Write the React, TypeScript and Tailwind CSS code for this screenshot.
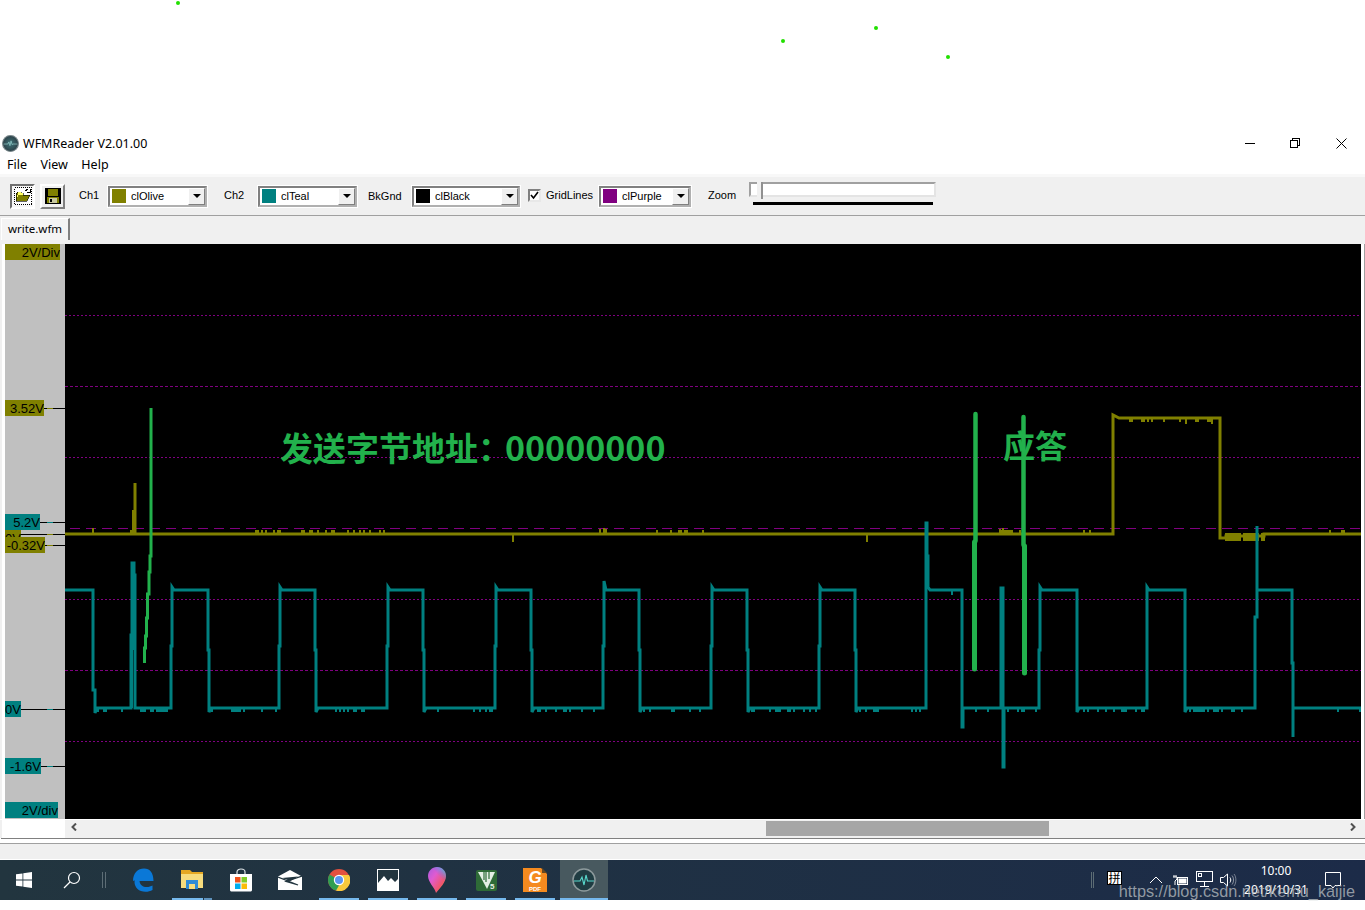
import React from "react";

const UI = "font-['Noto_Sans','Liberation_Sans',sans-serif]";
const ARIAL = "font-['Liberation_Sans',Arial,sans-serif]";

function frac(n: number) {
  return n - Math.floor(n);
}
function bumps(x0: number, x1: number, y: number, dy: number, seed: number, density: number) {
  let d = "";
  for (let x = x0; x < x1; x += 2) {
    if (frac(Math.sin(x * 12.9898 + seed) * 43758.5453) < density) {
      d += `M${x} ${y}v${dy}`;
    }
  }
  return d;
}

const tealMain =
  "M65 590H93V690H95V713L97 708H131V635H132V563H134V575H135V648V708H171V646H172V587L174 590H208V650H209V712L211 708" +
  "H279V646H280V587L282 590H315V650H316V712L318 708" +
  "H387V646H388V587L390 590H423V650H424V712L426 708" +
  "H495V646H496V587L498 590H531V650H532V712L534 708" +
  "H603V646H604V581L606 590H639V650H640V712L642 708" +
  "H711V646H712V587L714 590H747V650H748V712L750 708" +
  "H819V646H820V587L822 590H855V650H856V712L858 708" +
  "H926V523H927V556H928V587L930 590H962V727H963V708H1001V588H1003V767H1004V708H1006H1039V650H1040V587L1042 590H1077V712L1079 708" +
  "H1147V587L1149 590H1185V712L1187 708" +
  "H1255V617H1257V526V590H1292V663H1293V737V708H1295H1361";

const teal2 = "M131.5 635V708M133 575V650M1002 588V708";

const oliveMain = "M65 534H1113V415L1119 418H1220V538H1226V536H1264V534H1361";

function Combo({ color, name, w }: { color: string; name: string; w: string }) {
  return (
    <div className={`${w} h-[21px] shrink-0 flex items-center bg-white border-2 border-t-[#808080] border-l-[#808080] border-r-[#b0b0b0] border-b-[#b0b0b0] outline outline-1 outline-white`}>
      <div className="ml-[2px] w-[14px] h-[14px] shrink-0" style={{ backgroundColor: color }} />
      <span className={`ml-[5px] flex-1 text-[11px] text-black ${ARIAL}`}>{name}</span>
      <div className="w-[17px] h-[17px] shrink-0 bg-[#f0f0f0] border-r border-b border-r-[#808080] border-b-[#808080] border-t border-l border-t-white border-l-white flex items-center justify-center">
        <div className="w-0 h-0 border-l-[4px] border-r-[4px] border-t-[4px] border-l-transparent border-r-transparent border-t-black" />
      </div>
    </div>
  );
}

function Label({ text, bg, top, w }: { text: string; bg: string; top: string; w: string }) {
  return (
    <div className={`absolute left-0 ${top} ${w} h-[16px] ${bg} text-right text-[13px] leading-[17px] text-black overflow-hidden whitespace-nowrap ${ARIAL}`}>
      {text}
    </div>
  );
}

function Tick({ top, left, c }: { top: string; left: string; c: string }) {
  return (
    <div className={`absolute ${top} ${left} right-0 h-px bg-black`}>
      <div className={`absolute top-0 h-px w-[6px] ${c} right-[12px]`} />
    </div>
  );
}

function Chart() {
  return (
    <svg viewBox="65 244 1296 575" className="block w-[1296px] h-[575px]">
      <rect x="65" y="244" width="1296" height="575" fill="#000" />
      <g stroke="#800080" strokeWidth="1" shapeRendering="crispEdges" fill="none">
        <path d="M65 315.5H1361M65 457.5H1361M65 599.5H1361M65 741.5H1361" strokeDasharray="2 2" />
        <path d="M65 386.5H1361M65 670.5H1361" strokeDasharray="3 2" />
        <path d="M70 528.5H1361" strokeDasharray="10 6" />
      </g>
      <g fill="none" stroke="#808000">
        <path d={oliveMain} strokeWidth="3" strokeLinejoin="miter" />
        <path d="M135 483V534" strokeWidth="3" />
        <path d="M134 510V534" strokeWidth="4" />
        <path d="M131 530V534M93 528V534M1000 529V534M1003 528V534" strokeWidth="2" />
        <path
          d={
            bumps(256, 282, 534, -4, 1, 0.6) +
            bumps(300, 386, 534, -4, 2, 0.35) +
            bumps(600, 608, 534, -5, 3, 0.7) +
            bumps(655, 705, 534, -4, 4, 0.3) +
            bumps(1000, 1022, 534, -4, 5, 0.4) +
            bumps(1078, 1092, 534, -4, 6, 0.5) +
            bumps(1330, 1361, 534, -4, 7, 0.2) +
            bumps(1120, 1218, 418, 4, 8, 0.25) +
            bumps(1226, 1266, 533, 8, 9, 0.8) +
            "M513 534v8M867 534v8M604 534v-6M1186 418v6M1212 418v6"
          }
          strokeWidth="2"
        />
      </g>
      <g fill="none" stroke="#008080">
        <path d={tealMain} strokeWidth="3" strokeLinejoin="miter" />
        <path d={teal2} strokeWidth="3" />
        <path
          d={
            bumps(98, 130, 708, 4, 11, 0.4) +
            bumps(137, 170, 708, 4, 12, 0.4) +
            bumps(212, 278, 708, 4, 13, 0.25) +
            bumps(320, 386, 708, 4, 14, 0.25) +
            bumps(428, 494, 708, 4, 15, 0.25) +
            bumps(536, 602, 708, 4, 16, 0.25) +
            bumps(644, 710, 708, 4, 17, 0.25) +
            bumps(752, 818, 708, 4, 18, 0.25) +
            bumps(860, 925, 708, 4, 19, 0.25) +
            bumps(966, 1000, 708, 4, 20, 0.2) +
            bumps(1008, 1038, 708, 4, 21, 0.25) +
            bumps(1082, 1146, 708, 4, 22, 0.3) +
            bumps(1190, 1254, 708, 4, 23, 0.3) +
            bumps(1300, 1361, 708, 4, 24, 0.1) +
            "M952 590v5"
          }
          strokeWidth="2"
        />
      </g>
      <g fill="none" stroke="#22b14c" strokeLinecap="round">
        <path d="M151 408V556H150V572H149V594H147.5V618H146.5V636H145.5V648H144.5V663" strokeWidth="3" strokeLinecap="butt" />
        <path d="M975.5 414V541" strokeWidth="4.5" />
        <path d="M974.5 542V669" strokeWidth="5" />
        <path d="M1023.5 417V545" strokeWidth="4.5" />
        <path d="M1024.5 546V673" strokeWidth="5" />
      </g>
    </svg>
  );
}

function TitleIcon({ size }: { size: number }) {
  return (
    <svg width={size} height={size} viewBox="0 0 32 32">
      <defs>
        <radialGradient id={`ti${size}`} cx="50%" cy="50%" r="55%">
          <stop offset="0%" stopColor="#3f7478" />
          <stop offset="100%" stopColor="#2a3a42" />
        </radialGradient>
      </defs>
      <circle cx="16" cy="16" r="15" fill={`url(#ti${size})`} stroke="#7d8b8e" strokeWidth="2" />
      <path d="M3 17H11L13 13L15 20L17 11L19 18L21 17H29" fill="none" stroke="#9fd8d4" strokeWidth="1.2" />
    </svg>
  );
}

function TaskIcon({ children, active, bar, split }: { children?: React.ReactNode; active?: boolean; bar?: boolean; split?: boolean }) {
  return (
    <div className={`relative w-[48px] h-[40px] shrink-0 flex items-center justify-center ${active ? "bg-[#48595f]" : ""}`}>
      {children}
      {bar && !split && <div className={`absolute bottom-0 h-[2px] bg-[#76b9ed] ${active ? "left-0 right-0" : "left-[4px] right-[4px]"}`} />}
      {split && (
        <div className="absolute bottom-0 left-[4px] right-[4px] h-[2px] flex gap-px">
          <div className="w-[31px] bg-[#76b9ed]" />
          <div className="flex-1 bg-[#5f93bd]" />
        </div>
      )}
    </div>
  );
}

function Taskbar() {
  return (
    <div className="h-[40px] shrink-0 flex items-center bg-gradient-to-r from-[#22353f] to-[#1c2b48] relative">
      <div className="w-[48px] h-[40px] flex items-center justify-center">
        <svg width="16" height="16" viewBox="0 0 16 16" fill="#fff">
          <path d="M0 2.3L6.5 1.4V7.6H0ZM7.3 1.3L16 0V7.6H7.3ZM0 8.4H6.5V14.6L0 13.7ZM7.3 8.4H16V16L7.3 14.7Z" />
        </svg>
      </div>
      <div className="w-[48px] h-[40px] flex items-center justify-center">
        <svg width="18" height="18" viewBox="0 0 18 18" fill="none" stroke="#fff" strokeWidth="1.2">
          <circle cx="11" cy="7" r="5.5" />
          <path d="M7 11L1 17" />
        </svg>
      </div>
      <div className="ml-[6px] mr-[13px] w-[4px] h-[16px] border-x border-[#5d6d75]" />
      <div className="flex gap-px">
        <TaskIcon>
          <svg width="22" height="24" viewBox="0 0 22 24">
            <path
              d="M1 13C1 5 6 0.5 12 0.5C18 0.5 21.5 5 21.5 13H7.5C8 17 11 19 14.5 19C17 19 19 18.3 20.5 17.5V22C18.5 23.2 16 23.8 13.5 23.8C7 23.8 2.5 19.5 2.5 14C2.5 11 4 8.5 7 6.5C5.5 8 4.8 9.3 4.5 10.5C6 8 9 6 11 6C13.5 6 15 7.5 15 9.3H8C7.7 10 7.6 10.2 7.5 10.2L1 13Z"
              fill="#0a78d7"
            />
          </svg>
        </TaskIcon>
        <TaskIcon split>
          <svg width="22" height="20" viewBox="0 0 22 20" className="-mt-px">
            <path d="M0 0H9L11 2H22V18H0Z" fill="#e5a823" />
            <rect x="0" y="3" width="22" height="15" fill="#f7dc7d" />
            <rect x="0" y="3" width="22" height="1" fill="#e5a823" />
            <path d="M5 19V10H17V19H14V14H8V19Z" fill="#2f8bd6" />
            <rect x="8" y="14" width="6" height="5" fill="#f7dc7d" />
          </svg>
        </TaskIcon>
        <TaskIcon>
          <svg width="24" height="24" viewBox="0 0 24 24">
            <path d="M8 6V4C8 0 16 0 16 4V6" fill="none" stroke="#dfe5e8" strokeWidth="1.2" />
            <path d="M1 6H23V22C23 23 22 23.5 21 23.5H3C2 23.5 1 23 1 22Z" fill="#fff" />
            <rect x="6" y="9" width="5.5" height="5.5" fill="#f1511b" />
            <rect x="12.5" y="9" width="5.5" height="5.5" fill="#80cc28" />
            <rect x="6" y="15.5" width="5.5" height="5.5" fill="#00adef" />
            <rect x="12.5" y="15.5" width="5.5" height="5.5" fill="#fbbc09" />
          </svg>
        </TaskIcon>
        <TaskIcon>
          <svg width="24" height="20" viewBox="0 0 24 20">
            <path d="M0 6.5L12 0L24 6.5V20H0Z" fill="#fff" />
            <path d="M0 7L20 15L8 11.5L24 6" fill="none" stroke="#22353f" strokeWidth="1.2" />
            <path d="M4 8L20 6.5L12.5 11Z" fill="#22353f" />
          </svg>
        </TaskIcon>
        <TaskIcon bar>
          <svg width="22" height="22" viewBox="0 0 22 22">
            <circle cx="11" cy="11" r="11" fill="#e2503f" />
            <path d="M11 6H21A11 11 0 0 1 8 21.6Z" fill="#f8c93d" />
            <path d="M11 11L1.5 5.5A11 11 0 0 0 8 21.6L13 13Z" fill="#2f9e52" />
            <circle cx="11" cy="11" r="5.2" fill="#fff" />
            <circle cx="11" cy="11" r="4" fill="#5a95f2" />
          </svg>
        </TaskIcon>
        <TaskIcon bar>
          <svg width="22" height="22" viewBox="0 0 22 22">
            <rect x="0.5" y="0.5" width="21" height="21" fill="#22353f" stroke="#fff" />
            <path d="M1 22V14L7 7L11 12L14 9L18 13L21 10V22Z" fill="#fff" />
          </svg>
        </TaskIcon>
        <TaskIcon bar>
          <svg width="18" height="26" viewBox="0 0 18 26">
            <defs>
              <linearGradient id="p3d" x1="0" y1="0" x2="1" y2="1">
                <stop offset="0%" stopColor="#a65be0" />
                <stop offset="35%" stopColor="#e05bd0" />
                <stop offset="70%" stopColor="#f0566e" />
                <stop offset="100%" stopColor="#f5a623" />
              </linearGradient>
              <linearGradient id="p3e" x1="1" y1="0" x2="0" y2="1">
                <stop offset="0%" stopColor="#28e0e6" />
                <stop offset="60%" stopColor="#4a7cf0" stopOpacity="0" />
              </linearGradient>
            </defs>
            <path d="M9 0C14 0 18 4 18 9C18 15 12 21 8 26C7 21 0 15 0 9C0 4 4 0 9 0Z" fill="url(#p3d)" />
            <path d="M9 0C14 0 18 4 18 9C18 11 17 13 16 14C12 10 8 6 5 1C6 0.5 7.5 0 9 0Z" fill="url(#p3e)" />
          </svg>
        </TaskIcon>
        <TaskIcon bar>
          <svg width="21" height="21" viewBox="0 0 21 21">
            <rect width="21" height="21" rx="2" fill="#2e6b37" />
            <path d="M2 2H19L11 19Z" fill="#e4efe5" />
            <path d="M8 2V10M10 2V12M13 2V9" stroke="#2e6b37" strokeWidth="1.2" />
            <text x="14" y="19" fontSize="8" fontWeight="700" fill="#e4efe5" fontFamily="Liberation Sans">5</text>
          </svg>
        </TaskIcon>
        <TaskIcon bar>
          <svg width="24" height="24" viewBox="0 0 24 24">
            <path d="M0 0H18L24 6V24H0Z" fill="#f58a1f" />
            <path d="M19 0L24 5H19Z" fill="#6a4a20" />
            <text x="12" y="15" fontSize="17" fontWeight="700" fontStyle="italic" fill="#fff" textAnchor="middle" fontFamily="Liberation Sans">G</text>
            <text x="12" y="22.5" fontSize="6" fontWeight="700" fill="#fff" textAnchor="middle" fontFamily="Liberation Sans">PDF</text>
          </svg>
        </TaskIcon>
        <TaskIcon active bar>
          <svg width="24" height="24" viewBox="0 0 24 24">
            <circle cx="12" cy="12" r="11" fill="#1f3c42" stroke="#8d9a9c" strokeWidth="1.5" />
            <path d="M2 13H8L10 9L12 17L14 7L15.5 13H22" fill="none" stroke="#58d8cc" strokeWidth="1.1" />
          </svg>
        </TaskIcon>
      </div>
      <div className="flex-1" />
      <div className="w-[3px] h-[16px] border-x border-[#5d6d75] mr-[13px]" />
      <div className="w-[15px] h-[14px] mb-[4px] bg-white border border-black flex items-center justify-center text-[12px] leading-none text-black font-['Noto_Sans_CJK_SC',sans-serif] mr-[27px]">
        拼
      </div>
      <svg width="14" height="8" viewBox="0 0 14 8" fill="none" stroke="#fff" strokeWidth="1" className="mr-[9px]">
        <path d="M1 7L7 1L13 7" />
      </svg>
      <svg width="17" height="13" viewBox="0 0 17 13" fill="none" stroke="#fff" strokeWidth="1" className="mr-[7px]">
        <rect x="5.5" y="3.5" width="10" height="7" />
        <rect x="7" y="5" width="7" height="4" fill="#fff" />
        <path d="M2 1V3M4 1V3M1 3H5V5L3 7V11" />
      </svg>
      <svg width="17" height="18" viewBox="0 0 17 18" fill="none" stroke="#fff" strokeWidth="1" className="mr-[7px]">
        <rect x="0.5" y="0.5" width="16" height="10" />
        <rect x="2.5" y="2.5" width="3" height="3" />
        <path d="M8.5 11V15M4 15.5H13" />
      </svg>
      <svg width="17" height="14" viewBox="0 0 17 14" fill="none" stroke="#fff" strokeWidth="1">
        <path d="M0.5 4.5H3.5L7.5 1V13L3.5 9.5H0.5Z" />
        <path d="M10 4.5C11 6 11 8 10 9.5" />
        <path d="M12 2.5C14 5 14 9 12 11.5" opacity="0.5" />
        <path d="M14 1C16.5 4 16.5 10 14 13" opacity="0.4" />
      </svg>
      <div className={`w-[78px] text-center text-white text-[12px] leading-[19px] ${UI}`}>
        <div>10:00</div>
        <div>2019/10/31</div>
      </div>
      <svg width="16" height="17" viewBox="0 0 16 17" fill="none" stroke="#fff" strokeWidth="1" className="ml-[10px] mr-[24px]">
        <path d="M0.5 0.5H15.5V13.5H10L8 16L6 13.5H0.5Z" />
      </svg>
      <div className={`absolute right-[10px] top-[22px] text-[16.3px] leading-[18px] text-[#b9bfc2]/75 whitespace-nowrap ${ARIAL}`}>
        https://blog.csdn.net/kemu_kaijie
      </div>
    </div>
  );
}

export default function App() {
  return (
    <div className="w-[1365px] h-[910px] bg-white flex flex-col overflow-hidden relative">
      {/* scattered dots */}
      <div className="h-[132px] shrink-0 relative">
        <div className="absolute left-[176px] top-px w-1 h-1 rounded-full bg-[#22e000]" />
        <div className="absolute left-[781px] top-[39px] w-1 h-1 rounded-full bg-[#22e000]" />
        <div className="absolute left-[874px] top-[26px] w-1 h-1 rounded-full bg-[#22e000]" />
        <div className="absolute left-[946px] top-[55px] w-1 h-1 rounded-full bg-[#22e000]" />
      </div>
      {/* title */}
      <div className={`h-[22px] shrink-0 flex items-center pl-[2px] bg-white text-[12.5px] text-black ${UI}`}>
        <TitleIcon size={17} />
        <span className="ml-[4px] mt-[2px]">WFMReader V2.01.00</span>
        <div className="flex-1" />
        <svg width="10" height="10" viewBox="0 0 10 10" stroke="#000" fill="none" shapeRendering="crispEdges" className="mr-[35px]">
          <path d="M0 5.5H10" />
        </svg>
        <svg width="10" height="10" viewBox="0 0 10 10" stroke="#000" fill="none" shapeRendering="crispEdges" className="mr-[36px]">
          <rect x="0.5" y="2.5" width="7" height="7" />
          <path d="M2.5 2V0.5H9.5V7.5H8" />
        </svg>
        <svg width="11" height="11" viewBox="0 0 11 11" stroke="#000" fill="none" className="mr-[18px]">
          <path d="M0.5 0.5L10.5 10.5M10.5 0.5L0.5 10.5" />
        </svg>
      </div>
      {/* menu */}
      <div className={`h-[20px] shrink-0 flex items-center pl-[7px] pt-[2px] gap-[13.5px] bg-white text-[12.5px] text-black ${UI}`}>
        <span>File</span>
        <span>View</span>
        <span>Help</span>
      </div>
      <div className="h-[3px] shrink-0 bg-[#f8f8f8]" />
      {/* toolbar */}
      <div className={`h-[39px] shrink-0 flex items-center pl-[10px] bg-[#f0f0f0] border-b border-[#a0a0a0] text-[11px] text-black ${ARIAL}`}>
        <div className="w-[25px] h-[25px] shrink-0 border-2 border-t-[#707070] border-l-[#707070] border-r-white border-b-white bg-[#f7f7f7] flex items-center justify-center">
          <svg width="18" height="18" viewBox="0 0 18 18" shapeRendering="crispEdges">
            <rect x="0.5" y="0.5" width="17" height="17" fill="#fff" stroke="#000" strokeDasharray="1 1" />
            <path d="M2 14V6H3V5H7V6H9V8H16L13 14Z" fill="#808000" stroke="#000" strokeWidth="0.6" />
            <path d="M3 8H9V6H7V5H4V12Z" fill="#ffff66" />
            <path d="M11 4L14 2M13 5H16V2" fill="none" stroke="#000" />
          </svg>
        </div>
        <div className="ml-[5px] w-[25px] h-[25px] shrink-0 border-2 border-t-white border-l-white border-r-[#808080] border-b-[#808080] bg-[#f0f0f0] flex items-center justify-center">
          <svg width="16" height="16" viewBox="0 0 16 16" shapeRendering="crispEdges">
            <path d="M0 0H15L16 1V16H0Z" fill="#000" />
            <rect x="3" y="1" width="10" height="7" fill="#808000" />
            <rect x="2" y="9" width="12" height="6" fill="#808000" />
            <rect x="4" y="10" width="8" height="5" fill="#c8c8a0" />
            <rect x="5" y="11" width="2" height="3" fill="#000" />
          </svg>
        </div>
        <span className="ml-[14px] w-[29px] -mt-[2px]">Ch1</span>
        <Combo color="#808000" name="clOlive" w="w-[99px]" />
        <span className="ml-[17px] w-[34px] -mt-[2px]">Ch2</span>
        <Combo color="#008080" name="clTeal" w="w-[99px]" />
        <span className="ml-[11px] w-[44px]">BkGnd</span>
        <Combo color="#000000" name="clBlack" w="w-[108px]" />
        <div className="ml-[8px] w-[13px] h-[13px] shrink-0 border-2 border-t-[#808080] border-l-[#808080] border-r-[#e8e8e8] border-b-[#e8e8e8] bg-white flex items-center justify-center -mt-[2px]">
          <svg width="9" height="9" viewBox="0 0 9 9" fill="none" stroke="#000" strokeWidth="1.6">
            <path d="M1 4L3.5 7L8 1" />
          </svg>
        </div>
        <span className="ml-[5px] w-[53px] -mt-[2px]">GridLines</span>
        <Combo color="#800080" name="clPurple" w="w-[92px]" />
        <span className="ml-[17px] w-[41px] -mt-[2px]">Zoom</span>
        <div className="w-[187px] h-[28px] shrink-0 flex flex-col -mt-[1px]">
          <div className="relative h-[15px] bg-white border-2 border-t-[#a0a0a0] border-l-[#a0a0a0] border-r-[#e4e4e4] border-b-[#e4e4e4]">
            <div className="absolute left-[6px] -top-[2px] w-[6px] h-[17px] bg-[#f0f0f0] border-r-2 border-r-[#909090]" />
          </div>
          <div className="mt-[5px] ml-[4px] w-[180px] h-[3px] bg-black" />
        </div>
      </div>
      {/* tab strip */}
      <div className={`h-[28px] shrink-0 pl-[1px] pt-[2px] bg-[#f0f0f0] text-[11.5px] text-black ${UI}`}>
        <div className="w-[69px] h-[22px] pb-[2px] bg-[#f4f4f4] border-t border-l border-t-white border-l-white border-r-2 border-r-[#808080] flex items-center justify-center">
          write.wfm
        </div>
      </div>
      {/* main chart area */}
      <div className="h-[575px] shrink-0 flex bg-[#f4f4f4]">
        <div className="w-[5px] shrink-0 bg-white border-l-2 border-[#f0f0f0]" />
        <div className="relative w-[60px] shrink-0 bg-[#c0c0c0]">
          <Tick top="top-[164px]" left="left-[39px]" c="bg-[#808000]" />
          <Tick top="top-[278px]" left="left-[35px]" c="bg-[#008080]" />
          <Tick top="top-[290px]" left="left-[16px]" c="bg-[#808000]" />
          <Tick top="top-[301px]" left="left-[40px]" c="bg-[#808000]" />
          <Tick top="top-[465px]" left="left-[16px]" c="bg-[#008080]" />
          <Tick top="top-[522px]" left="left-[36px]" c="bg-[#008080]" />
          <Label text="2V/Div" bg="bg-[#808000]" top="top-0" w="w-[55px]" />
          <Label text="3.52V" bg="bg-[#808000]" top="top-[156px]" w="w-[39px]" />
          <Label text="5.2V" bg="bg-[#008080]" top="top-[270px]" w="w-[35px]" />
          <Label text="0V" bg="bg-[#808000]" top="top-[286px]" w="w-[16px]" />
          <Label text="-0.32V" bg="bg-[#808000]" top="top-[293px]" w="w-[40px]" />
          <Label text="0V" bg="bg-[#008080]" top="top-[457px]" w="w-[16px]" />
          <Label text="-1.6V" bg="bg-[#008080]" top="top-[514px]" w="w-[36px]" />
          <Label text="2V/div" bg="bg-[#008080]" top="top-[558px]" w="w-[53px]" />
        </div>
        <div className="relative w-[1296px] shrink-0">
          <Chart />
          <div className="absolute left-[215px] top-[181px] text-[33px] leading-[44px] font-bold text-[#22b14c] whitespace-nowrap font-['Noto_Sans_CJK_SC','Noto_Sans',sans-serif]">
            发送字节地址：<span className="text-[34px] -ml-[6px]">00000000</span>
          </div>
          <div className="absolute left-[938px] top-[178px] text-[32px] leading-[44px] font-bold text-[#22b14c] whitespace-nowrap font-['Noto_Sans_CJK_SC',sans-serif]">
            应答
          </div>
        </div>
        <div className="flex-1 border-r border-[#a0a0a0] bg-white" />
      </div>
      {/* scroll row */}
      <div className="h-[1px] shrink-0 bg-white" />
      <div className="h-[18px] shrink-0 flex bg-[#f0f0f0]">
        <div className="w-[5px] shrink-0 bg-white border-l-2 border-[#f0f0f0]" />
        <div className="w-[60px] shrink-0 bg-white" />
        <div className="flex-1 flex items-start">
          <svg width="8" height="8" viewBox="0 0 8 8" fill="none" stroke="#505050" strokeWidth="2" className="ml-[5px] mt-[3px]">
            <path d="M6 0.5L2.5 4L6 7.5" />
          </svg>
          <div className="ml-[688px] mt-px w-[283px] h-[15px] bg-[#a6a6a6]" />
          <div className="flex-1" />
          <svg width="8" height="8" viewBox="0 0 8 8" fill="none" stroke="#505050" strokeWidth="2" className="mr-[8px] mt-[3px]">
            <path d="M2 0.5L5.5 4L2 7.5" />
          </svg>
        </div>
      </div>
      <div className="h-[1px] shrink-0 bg-[#808080] ml-px" />
      <div className="h-[4px] shrink-0 bg-white" />
      {/* status */}
      <div className="h-[16px] shrink-0 bg-[#f0f0f0] border-t border-[#a0a0a0]" />
      <div className="h-[1px] shrink-0 bg-white" />
      <Taskbar />
      <div className="flex-1 bg-white" />
    </div>
  );
}
